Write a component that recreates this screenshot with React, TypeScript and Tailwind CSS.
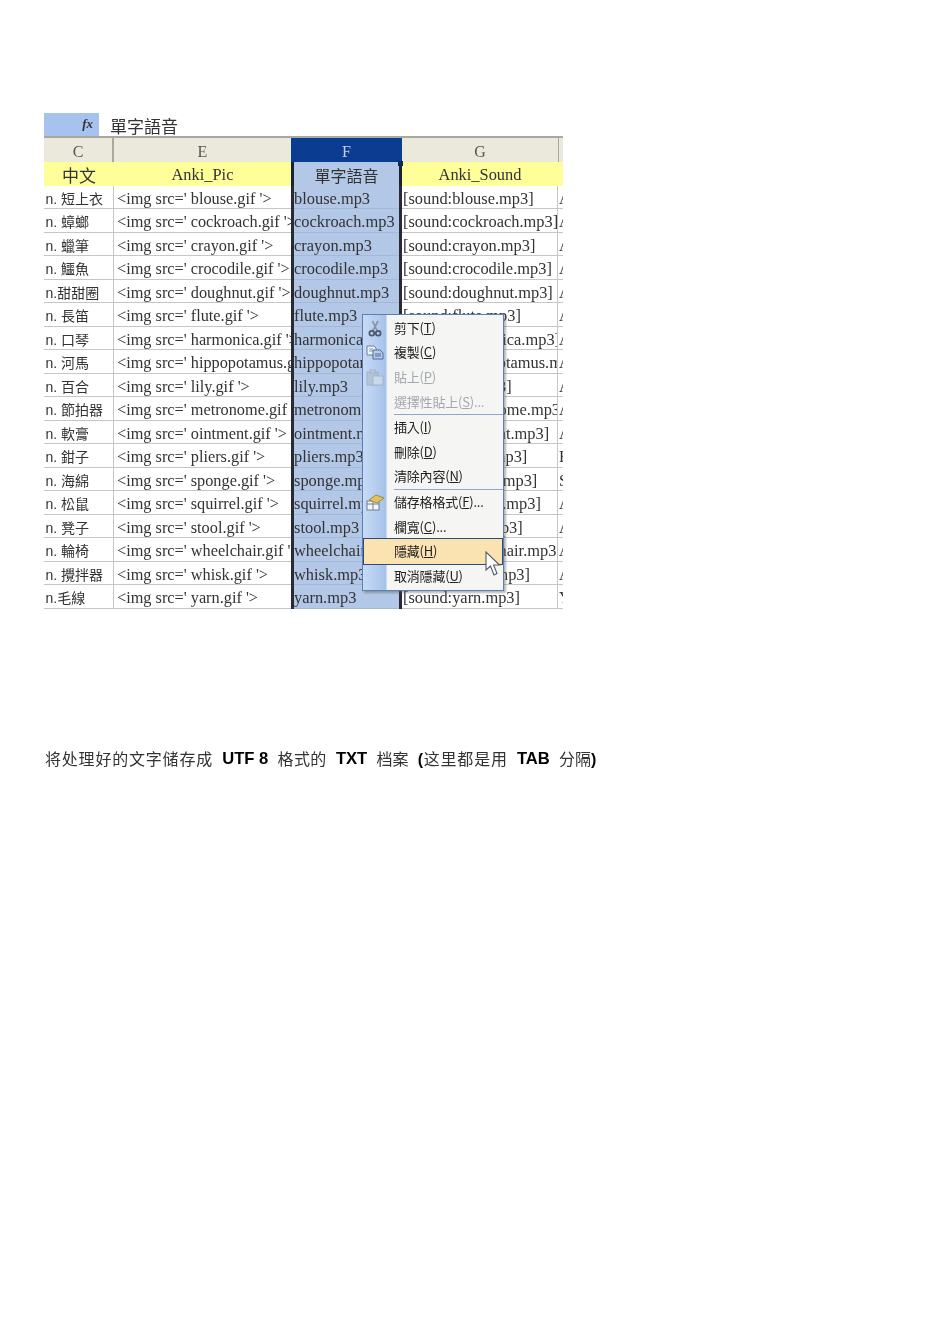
const rows: [string, string, string, string, string][] = [
  ["n. 短上衣", "<img src=' blouse.gif '>", "blouse.mp3", "[sound:blouse.mp3]", "A"],
  ["n. 蟑螂", "<img src=' cockroach.gif '>", "cockroach.mp3", "[sound:cockroach.mp3]", "A"],
  ["n. 蠟筆", "<img src=' crayon.gif '>", "crayon.mp3", "[sound:crayon.mp3]", "A"],
  ["n. 鱷魚", "<img src=' crocodile.gif '>", "crocodile.mp3", "[sound:crocodile.mp3]", "A"],
  ["n.甜甜圈", "<img src=' doughnut.gif '>", "doughnut.mp3", "[sound:doughnut.mp3]", "A"],
  ["n. 長笛", "<img src=' flute.gif '>", "flute.mp3", "[sound:flute.mp3]", "A"],
  ["n. 口琴", "<img src=' harmonica.gif '>", "harmonica.mp3", "[sound:harmonica.mp3]", "A"],
  ["n. 河馬", "<img src=' hippopotamus.gif '>", "hippopotamus.mp3", "[sound:hippopotamus.mp3]", "A"],
  ["n. 百合", "<img src=' lily.gif '>", "lily.mp3", "[sound:lily.mp3]", "A"],
  ["n. 節拍器", "<img src=' metronome.gif '>", "metronome.mp3", "[sound:metronome.mp3]", "A"],
  ["n. 軟膏", "<img src=' ointment.gif '>", "ointment.mp3", "[sound:ointment.mp3]", "A"],
  ["n. 鉗子", "<img src=' pliers.gif '>", "pliers.mp3", "[sound:pliers.mp3]", "F"],
  ["n. 海綿", "<img src=' sponge.gif '>", "sponge.mp3", "[sound:sponge.mp3]", "S"],
  ["n. 松鼠", "<img src=' squirrel.gif '>", "squirrel.mp3", "[sound:squirrel.mp3]", "A"],
  ["n. 凳子", "<img src=' stool.gif '>", "stool.mp3", "[sound:stool.mp3]", "A"],
  ["n. 輪椅", "<img src=' wheelchair.gif '>", "wheelchair.mp3", "[sound:wheelchair.mp3]", "A"],
  ["n. 攪拌器", "<img src=' whisk.gif '>", "whisk.mp3", "[sound:whisk.mp3]", "A"],
  ["n.毛線", "<img src=' yarn.gif '>", "yarn.mp3", "[sound:yarn.mp3]", "Y"],
];

const serif = "font-['Liberation_Serif','Noto_Sans_CJK_TC',serif]";
const cols = "grid grid-cols-[70px_177px_111px_156px_5px] grid-rows-[100%]";

function Scissors() {
  return (
    <svg width="14" height="17" viewBox="0 0 14 17" fill="none" stroke="#4d566b" strokeWidth="1.7">
      <path d="M4.5 1 L9 10.5 M10 1 L5 10.5" strokeWidth="1.7" stroke="#8a93a6" />
      <circle cx="3.8" cy="13.2" r="2.4" />
      <circle cx="10.2" cy="13.2" r="2.4" />
    </svg>
  );
}

function CopyIcon() {
  return (
    <svg width="18" height="15" viewBox="0 0 18 15">
      <path d="M1 1h7l2 2v7H1z" fill="#eef2fa" stroke="#6f7f9f" />
      <path d="M3 4h4M3 6h4" stroke="#8a97b3" />
      <path d="M7 5h7l3 3v6H7z" fill="#b9cdea" stroke="#4f6a9c" />
      <path d="M9 9h6M9 11h6" stroke="#4f6a9c" />
    </svg>
  );
}

function PasteIcon() {
  return (
    <svg width="18" height="17" viewBox="0 0 18 17" opacity="0.55">
      <rect x="1" y="3" width="11" height="13" fill="#aeb6c2" stroke="#8d96a5" />
      <rect x="4" y="1" width="5" height="3" fill="#c5cbd6" stroke="#8d96a5" />
      <rect x="7" y="7" width="10" height="9" fill="#dfe3ea" stroke="#9aa2b0" />
    </svg>
  );
}

function FormatIcon() {
  return (
    <svg width="20" height="17" viewBox="0 0 20 17">
      <rect x="2" y="7" width="12" height="9" fill="#f4f6fb" stroke="#6d7d99" />
      <path d="M2 10h12M8 7v9" stroke="#6d7d99" />
      <path d="M4 6 L11 1 L19 4 L12 9 Z" fill="#e3c25e" stroke="#9c8a3c" />
    </svg>
  );
}

function Cursor() {
  return (
    <svg width="16" height="26" viewBox="0 0 16 26" className="absolute left-[122px] top-[236px] z-20">
      <path d="M1 1 L1 19 L5.5 15 L9 24 L12 22.5 L8.6 14 L14.5 14 Z" fill="#fff" stroke="#555c66" strokeWidth="1.1" />
    </svg>
  );
}

function Item({ label, k, suffix = "", disabled = false, hot = false, icon }: { label: string; k: string; suffix?: string; disabled?: boolean; hot?: boolean; icon?: React.ReactNode }) {
  return (
    <div className={`relative flex h-[24.6px] items-center ${hot ? "z-10 mx-[1px] bg-[#fbe3b1] outline outline-1 outline-[#2d4a80]" : ""}`}>
      <div className={`flex shrink-0 items-center justify-center ${hot ? "w-[23px]" : "w-[24px]"}`}>{icon}</div>
      <div className={`pb-[2px] pl-[7px] text-[13px] leading-none tracking-[-0.2px] whitespace-nowrap ${disabled ? "text-[#a3a8b0]" : "text-[#222]"}`}>
        {label}(<span className="underline">{k}</span>){suffix}
      </div>
    </div>
  );
}

function Sep() {
  return <div className="ml-[31px] h-[1px] bg-[#8fa6cc]" />;
}

function ContextMenu() {
  return (
    <div className="absolute left-[318px] top-[201px] w-[142px] border border-[#5c7fb5] bg-[linear-gradient(to_right,#c8dbf5_0px,#a6c2ea_23px,#f5f5f3_24px)] py-[1px] font-['Noto_Sans_CJK_TC',sans-serif] shadow-[2px_2px_2px_rgba(90,90,90,0.45)]">
      <Item label="剪下" k="T" icon={<Scissors />} />
      <Item label="複製" k="C" icon={<CopyIcon />} />
      <Item label="貼上" k="P" disabled icon={<PasteIcon />} />
      <Item label="選擇性貼上" k="S" suffix="..." disabled />
      <Sep />
      <Item label="插入" k="I" />
      <Item label="刪除" k="D" />
      <Item label="清除內容" k="N" />
      <Sep />
      <Item label="儲存格格式" k="F" suffix="..." icon={<FormatIcon />} />
      <Item label="欄寬" k="C" suffix="..." />
      <Item label="隱藏" k="H" hot />
      <Item label="取消隱藏" k="U" />
      <Cursor />
    </div>
  );
}

export default function App() {
  return (
    <div className="min-h-[1344px] w-[950px] bg-white pl-[44px] pt-[113px]">
      <div className="relative w-[519px] text-[#333] blur-[0.35px]">
        <div className="flex h-[25px] items-stretch border-b-2 border-[#a8a89c]">
          <div className="flex w-[55px] items-center justify-end bg-[#a6c3f0] pb-[2px] pr-[6px]">
            <span className="font-['Liberation_Serif',serif] text-[13px] font-bold italic text-[#333]">fx</span>
          </div>
          <div className="pl-[11px] font-['Noto_Sans_CJK_TC',sans-serif] text-[17px] leading-[26px]">單字語音</div>
        </div>

        <div className={`${cols} h-[24px] text-[16px] leading-[28px] ${serif}`}>
          <div className="overflow-hidden border-r-2 border-[#a8a89c] bg-[#ebe8dc] text-center text-[#555]">C</div>
          <div className="overflow-hidden bg-[#ebe8dc] text-center text-[#555]">E</div>
          <div className="overflow-hidden bg-[#0a3d91] text-center text-[#c5d2e8]">F</div>
          <div className="overflow-hidden bg-[#ebe8dc] text-center text-[#555]">G</div>
          <div className="border-l border-[#a8a89c] bg-[#ebe8dc]" />
        </div>

        <div className={`${cols} h-[23.5px] bg-[#ffff99] leading-[26px] ${serif}`}>
          <div className="overflow-hidden text-center font-['Noto_Sans_CJK_TC',sans-serif] text-[17px]">中文</div>
          <div className="text-center text-[16.4px]">Anki_Pic</div>
          <div className="relative border-x-[3px] border-[#1c2433] bg-[#b3c7e6] text-center font-['Noto_Sans_CJK_TC',sans-serif] text-[16px]">
            單字語音
            <span className="absolute -right-[4px] -top-[1px] h-[5px] w-[5px] bg-[#10285a]" />
          </div>
          <div className="text-center text-[16.4px]">Anki_Sound</div>
          <div />
        </div>

        {rows.map((r) => (
          <div key={r[2]} className={`${cols} h-[23.5px] leading-[26px] ${serif}`}>
            <div className="overflow-hidden whitespace-nowrap border-b border-r border-[#c6c6c6] pl-[1.5px] font-['Liberation_Sans','Noto_Sans_CJK_TC',sans-serif] text-[14px]">{r[0]}</div>
            <div className="overflow-hidden whitespace-pre border-b border-[#c6c6c6] pl-[3px] text-[16.3px]">{r[1]}</div>
            <div className="overflow-hidden whitespace-nowrap border-x-[3px] border-[#262b36] bg-[#b3c7e6] text-[16.4px] shadow-[inset_0_-1px_0_#a4b8d8]">{r[2]}</div>
            <div className="overflow-hidden whitespace-nowrap border-b border-r border-[#c6c6c6] pl-[1px] text-[16.4px]">{r[3]}</div>
            <div className="overflow-hidden whitespace-nowrap border-b border-[#c6c6c6] pl-[1px] text-[16px]">{r[4]}</div>
          </div>
        ))}

        <ContextMenu />
      </div>

      <div className="mt-[139px] flex h-[24px] items-center gap-[9.2px] pl-[1px] font-['Liberation_Sans','Noto_Sans_CJK_SC',sans-serif] text-[16px] text-[#333] blur-[0.25px]">
        <span className="tracking-[0.8px]">将处理好的文字储存成</span>
        <b className="text-[16.6px] text-black">UTF 8</b>
        <span className="tracking-[0.4px]">格式的</span>
        <b className="text-[16.6px] text-black">TXT</b>
        <span>档案</span>
        <span className="tracking-[0.8px]"><b className="text-black">(</b>这里都是用</span>
        <b className="text-[16.6px] text-black">TAB</b>
        <span><span>分隔</span><b className="text-black">)</b></span>
      </div>
    </div>
  );
}
